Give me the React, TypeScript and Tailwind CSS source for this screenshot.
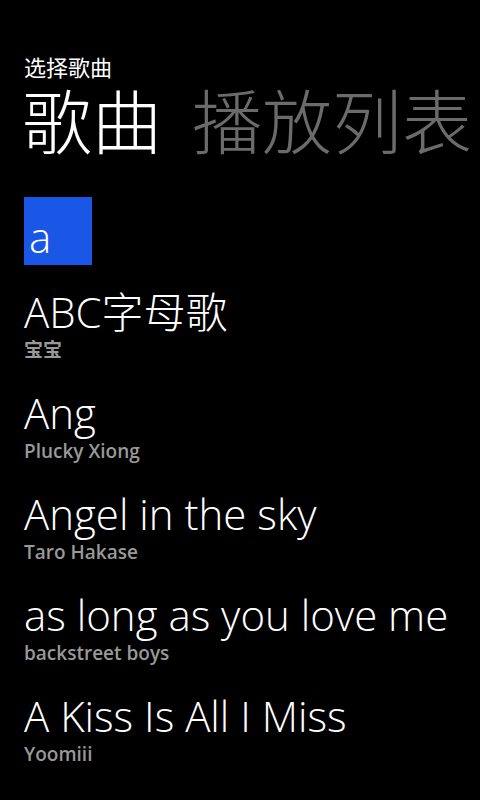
const songs = [
  { title: 'ABC字母歌', artist: '宝宝' },
  { title: 'Ang', artist: 'Plucky Xiong' },
  { title: 'Angel in the sky', artist: 'Taro Hakase' },
  { title: 'as long as you love me', artist: 'backstreet boys' },
  { title: 'A Kiss Is All I Miss', artist: 'Yoomiii' },
];

const font = { fontFamily: '"Open Sans", "Noto Sans CJK SC", sans-serif' };

export default function App() {
  return (
    <div className="w-[480px] h-[800px] overflow-hidden bg-black text-white" style={font}>
      {/* Page title */}
      <div className="pl-6 pt-[53px] text-[22px] leading-[28px]">选择歌曲</div>

      {/* Pivot headers */}
      <div className="flex gap-[30px] pl-[22px] mt-[1px] text-[70px] leading-[80px] font-light whitespace-nowrap">
        <span className="text-white">歌曲</span>
        <span className="text-[#6b6b6b]">播放列表</span>
      </div>

      {/* Jump list group */}
      <div className="pl-6 mt-[35px]">
        <div className="w-[68px] h-[68px] bg-[#1b57e6] flex items-end pl-[5px] pb-[4px]">
          <span className="text-[42px] leading-[48px] font-light">a</span>
        </div>
      </div>

      {/* Songs */}
      <div className="flex flex-col gap-[25px] pl-6 mt-[21px]">
        {songs.map((s) => (
          <div key={s.title} className="flex flex-col">
            <span className="text-[42px] leading-[52px] font-light whitespace-nowrap">{s.title}</span>
            <span className="text-[19px] leading-[24px] font-semibold text-[#999999]">{s.artist}</span>
          </div>
        ))}
      </div>
    </div>
  );
}
